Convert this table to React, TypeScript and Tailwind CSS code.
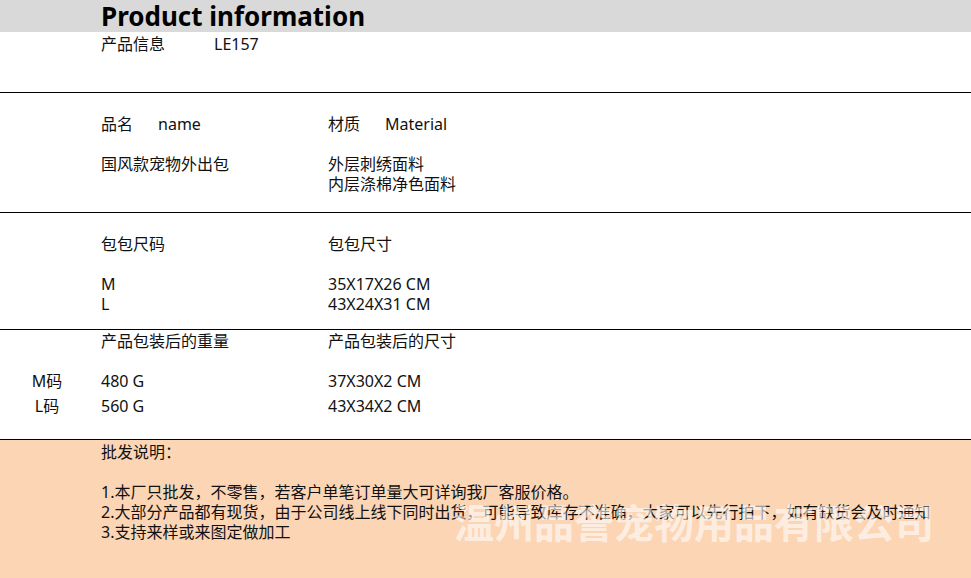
const font = { fontFamily: '"Noto Sans", "Noto Sans CJK SC", sans-serif' };

function Divider() {
  return <div className="h-px bg-black" />;
}

export default function App() {
  return (
    <div className="relative w-[971px] h-[578px] overflow-hidden bg-white text-[16px] leading-[20px] text-[#111]" style={font}>
      {/* header band */}
      <div className="h-[32px] bg-[#d9d9d9] pl-[101px]">
        <h1 className="text-[26px] leading-[33px] font-bold text-black">Product information</h1>
      </div>

      <div className="h-[60px] pl-[101px] pt-[2px]">
        <div className="flex">
          <span className="w-[113px]">产品信息</span>
          <span>LE157</span>
        </div>
      </div>
      <Divider />

      {/* name / material */}
      <div className="pl-[101px] pt-[21px] pb-[18px]">
        <div className="flex">
          <div className="w-[227px] flex gap-[25px]">
            <span>品名</span>
            <span>name</span>
          </div>
          <div className="flex gap-[25px]">
            <span>材质</span>
            <span>Material</span>
          </div>
        </div>
        <div className="flex mt-[20px]">
          <div className="w-[227px]">国风款宠物外出包</div>
          <div className="flex flex-col">
            <span>外层刺绣面料</span>
            <span>内层涤棉净色面料</span>
          </div>
        </div>
      </div>
      <Divider />

      {/* bag size */}
      <div className="pl-[101px] pt-[21px] pb-[15px]">
        <div className="flex">
          <div className="w-[227px]">包包尺码</div>
          <div>包包尺寸</div>
        </div>
        <div className="flex mt-[20px]">
          <div className="w-[227px] flex flex-col">
            <span>M</span>
            <span>L</span>
          </div>
          <div className="flex flex-col">
            <span>35X17X26 CM</span>
            <span>43X24X31 CM</span>
          </div>
        </div>
      </div>
      <Divider />

      {/* packed weight / size */}
      <div className="pt-[1px] pb-[23px]">
        <div className="flex pl-[101px]">
          <div className="w-[227px]">产品包装后的重量</div>
          <div>产品包装后的尺寸</div>
        </div>
        <div className="flex flex-col gap-[5px] mt-[20px]">
          {[
            ["M码", "480 G", "37X30X2 CM"],
            ["L码", "560 G", "43X34X2 CM"],
          ].map(([size, weight, dim]) => (
            <div key={size} className="flex">
              <div className="w-[94px] text-center">{size}</div>
              <div className="w-[7px]" />
              <div className="w-[227px]">{weight}</div>
              <div>{dim}</div>
            </div>
          ))}
        </div>
      </div>
      <Divider />

      {/* wholesale notes */}
      <div className="h-[138px] bg-[#fcd5b5] pl-[101px] pt-[2px]">
        <p>批发说明：</p>
        <p className="h-[20px]" />
        <p>1.本厂只批发，不零售，若客户单笔订单量大可详询我厂客服价格。</p>
        <p>2.大部分产品都有现货，由于公司线上线下同时出货，可能导致库存不准确，大家可以先行拍下，如有缺货会及时通知</p>
        <p>3.支持来样或来图定做加工</p>
      </div>

      {/* watermark */}
      <div className="absolute left-[454px] top-[501px] text-[40px] leading-[44px] font-bold text-white/60 whitespace-nowrap pointer-events-none">
        温州品誉宠物用品有限公司
      </div>
    </div>
  );
}
